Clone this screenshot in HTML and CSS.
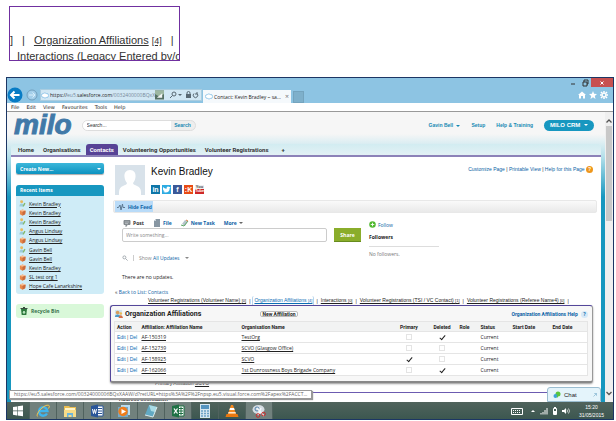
FILE: index.html
```html
<!DOCTYPE html>
<html lang="en">
<head>
<meta charset="utf-8">
<title>Contact: Kevin Bradley</title>
<link rel="stylesheet" href="styles.css">
</head>
<body>
<svg class="defs" width="0" height="0" aria-hidden="true">
  <symbol id="person" viewBox="0 0 8 8"><circle cx="3" cy="2" r="1.7" fill="#e9b95c"/><path d="M.5 7.5Q.5 4 3 4t2.5 3.500z" fill="#9dccdc"/><path d="M4 7l2-4 1.500 1-2 3.500z" fill="#83b86a"/></symbol>
  <symbol id="cube" viewBox="0 0 8 8"><path d="M1 2l3-1.500L7.500 2 7 6 4 7.700 1 6z" fill="#e8894a"/><path d="M1 2l3 1 3.500-1L4 .5z" fill="#f8c199"/><path d="M4 3v4.500L7 6l.5-4z" fill="#c96a3c"/></symbol>
  <symbol id="bubble" viewBox="0 0 10 8"><path d="M3 1.500Q5-.2 6.500 1.500 9.500 1 9.500 4T6.500 6.500Q5 8 3.500 6.500.5 6.500.5 4T3 1.500z" fill="#fff" stroke="#83bfe6"/></symbol>
</svg>

<aside class="callout">
  <p class="callout-row"><span>]</span><span>|</span><span><a href="#aff">Organization Affiliations</a> <a class="count" href="#aff">[4]</a></span><span>|</span></p>
  <p class="callout-next"><a href="#int">Interactions (Legacy Entered by/o</a></p>
</aside>

<main class="shot">
  <header class="chrome">
    <div class="win-controls">
      <button aria-label="Minimise"><svg viewBox="0 0 8 8"><path d="M2 5h4" stroke="#333"/></svg></button>
      <button aria-label="Restore"><svg viewBox="0 0 8 8"><path d="M2 3h4v4H2zM3 3V1h4v4H6" fill="none" stroke="#333"/></svg></button>
      <button class="close" aria-label="Close"><svg viewBox="0 0 8 8"><path d="M2.500 2.500l3 3m0-3l-3 3" stroke="#fff"/></svg></button>
    </div>
    <div class="address-row">
      <button class="back" aria-label="Back"><svg viewBox="0 0 16 16"><circle cx="8" cy="8" r="7.500" fill="#087cc5"/><path d="M12.500 8H4m3.500-3.500L4 8l3.500 3.500" fill="none" stroke="#fff" stroke-width="2"/></svg></button>
      <button class="forward" aria-label="Forward"><svg viewBox="0 0 12 12"><circle cx="6" cy="6" r="5" fill="#a4cfea" stroke="#729fbd"/><path d="M3 6h6M6.500 3.500L9 6 6.500 8.500" fill="none" stroke="#d9effb"/></svg></button>
      <div class="address">
        <svg class="ic"><use href="#bubble"/></svg>
        <span class="url">https://<i>eu5.</i>salesforce.com<i>/0032400000BQxX</i></span>
        <svg class="pic" viewBox="0 0 10 10"><path d="M0 0h10v10H0z" fill="#557064"/><path d="M0 0h10v4L5 7 0 4z" fill="#9db7a2"/><path d="M2 8l6-5v5z" fill="#f2f5f4"/></svg>
        <svg class="tools" viewBox="0 0 32 8"><g fill="none" stroke="#596872"><circle cx="6" cy="3" r="2"/><path d="M4.500 4.500L2 7M26 2.500a2.300 2.300 0 1 0 3 0M29 1v2h-2M19 3V2a1.500 1.500 0 0 1 3 0v1"/></g><path d="M10 3h4l-2 2zM18 3h5v4h-5z" fill="#596872"/></svg>
      </div>
      <div class="tab"><svg class="ic"><use href="#bubble"/></svg><span>Contact: Kevin Bradley ~ sa...</span><button aria-label="Close tab">×</button></div>
      <button class="new-tab" aria-label="New tab"></button>
      <svg class="fav" viewBox="0 0 30 8"><path d="M0 4l4-3.500L8 4H7v3.500H5V5H3v2.500H1V4zM15 0l1.100 2.700L19 3l-2.200 2 .7 3L15 6.300 12.500 8l.7-3L11 3l2.900-.3z" fill="#fff"/><path d="M26 0v8m-4-4h8m-7-3l6 6m0-6l-6 6" stroke="#fff" stroke-width="1.500"/><circle cx="26" cy="4" r="1.800" fill="#8dc4e3" stroke="#fff"/></svg>
    </div>
  </header>
  <nav class="menubar"><a href="#f">File</a><a href="#e">Edit</a><a href="#v">View</a><a href="#fa">Favourites</a><a href="#t">Tools</a><a href="#h">Help</a></nav>

  <div class="viewport">
    <div class="page">
      <header class="site-head">
        <span class="logo">milo</span>
        <form class="search"><input type="text" placeholder="Search..." aria-label="Search"><button type="button">Search</button></form>
        <nav class="user-nav"><a href="#g">Gavin Bell <b class="caret"></b></a><a href="#s">Setup</a><a href="#ht">Help &amp; Training</a><button class="app">MILO CRM <b class="caret"></b></button></nav>
      </header>
      <nav class="tabs"><a href="#home">Home</a><a href="#org">Organisations</a><a class="on" href="#con">Contacts</a><a href="#vo">Volunteering Opportunities</a><a href="#vr">Volunteer Registrations</a><a href="#add" aria-label="More tabs">+</a></nav>
      <div class="body">
        <aside class="side">
          <button class="create">Create New...<b class="caret"></b></button>
          <section class="recent">
            <h2>Recent Items</h2>
            <ul>
              <li><svg><use href="#person"/></svg><a href="#1">Kevin Bradley</a></li>
              <li><svg><use href="#cube"/></svg><a href="#2">Kevin Bradley</a></li>
              <li><svg><use href="#person"/></svg><a href="#3">Kevin Bradley</a></li>
              <li><svg><use href="#person"/></svg><a href="#4">Angus Lindsay</a></li>
              <li><svg><use href="#cube"/></svg><a href="#5">Angus Lindsay</a></li>
              <li><svg><use href="#person"/></svg><a href="#6">Gavin Bell</a></li>
              <li><svg><use href="#cube"/></svg><a href="#7">Gavin Bell</a></li>
              <li><svg><use href="#cube"/></svg><a href="#8">Kevin Bradley</a></li>
              <li><svg><use href="#cube"/></svg><a href="#9">SL test org 1</a></li>
              <li><svg><use href="#cube"/></svg><a href="#10">Hope Cafe Lanarkshire</a></li>
            </ul>
          </section>
          <a class="bin" href="#bin"><svg viewBox="0 0 8 8"><path d="M1 2h6L6.300 8H1.700z" fill="#2c7a3c"/><path d="M.5 1.500h7M3 .5h2" stroke="#3b4f40"/><path d="M3 6l1-2 1 2z" fill="none" stroke="#c8f0cc"/></svg>Recycle Bin</a>
        </aside>

        <section class="content">
          <div class="profile">
            <svg class="avatar" viewBox="0 0 30 30"><path d="M0 0h30v30H0z" fill="#d8e2ea"/><path d="M15 5c4 0 6 3 5.500 7-.3 3-1.500 5-2.500 6 0 3 8 2 8 9v3H4v-3c0-7 8-6 8-9-1-1-2.200-3-2.500-6C9 8 11 5 15 5z" fill="#fff"/></svg>
            <div>
              <h1>Kevin Bradley</h1>
              <div class="social"><a class="in" href="#li">in</a><a class="tw" href="#tw" aria-label="Twitter"><svg viewBox="0 0 9 9"><path d="M1 2q2 2 3.500 1.700Q4.500 1.500 6 1.500q1 0 1.300.6L8.500 2 7.700 3.200Q7.500 7.500 3.500 7.500 2 7.500.7 6.800 2 6.800 2.600 6.200 1 5.500 1 4.500z" fill="#fff"/></svg></a><a class="fb" href="#fb">f</a><a class="kl" href="#kl">:K</a><a class="yt" href="#yt"><span>You</span><span>Tube</span></a></div>
            </div>
            <p class="page-links"><a href="#c">Customize Page</a> | <a href="#p">Printable View</a> | <a href="#hp">Help for this Page</a> <span class="help">?</span></p>
          </div>
          <div class="feedbar"><button><svg viewBox="0 0 8 8"><path d="M0 4.500h1.500L3 2l1 5 1.500-6L6 4.500h2" fill="none" stroke="#5d7890"/></svg>Hide Feed</button></div>
          <div class="feed">
            <div class="publisher">
              <nav class="actions">
                <a class="post" href="#post"><svg viewBox="0 0 8 8"><path d="M1 1.500h6v4H4.500L3 7.500v-2H1z" fill="#858b90" stroke="#858b90"/><path d="M2 3h4M2 4.500h3" stroke="#cbd0d3" stroke-width=".6"/></svg>Post</a>
                <a href="#file"><svg viewBox="0 0 8 8"><path d="M3 0h4v8H1V2z" fill="#8796a2"/><path d="M1 2h2V0z" fill="#ccd5dc"/></svg>File</a>
                <a href="#task"><svg viewBox="0 0 8 8"><path d="M1 5l3-4 3 1-3 5z" fill="#b5c3ca"/><path d="M0 6l3 1 4-5" fill="none" stroke="#5da867"/><path d="M5 1l2 1" stroke="#df8046"/></svg>New Task</a>
                <a href="#more">More <b class="caret"></b></a>
              </nav>
              <div class="compose"><input type="text" placeholder="Write something..." aria-label="Write something"><button>Share</button></div>
              <p class="filter"><svg viewBox="0 0 8 8"><circle cx="3.200" cy="3.200" r="2" fill="none" stroke="#8d969c"/><path d="M5 5l2.500 2.500" stroke="#8d969c"/></svg><i></i><span>Show <a href="#all">All Updates</a></span><b class="caret"></b></p>
              <p class="empty">There are no updates.</p>
            </div>
            <div class="followers">
              <a href="#follow"><svg viewBox="0 0 8 8"><circle cx="4" cy="4" r="3.700" fill="#51b930"/><path d="M4 2v4M2 4h4" stroke="#fff"/></svg>Follow</a>
              <h2>Followers</h2>
              <p>No followers.</p>
            </div>
          </div>
          <p class="backlink">« <a href="#back">Back to List: Contacts</a></p>
          <nav class="related"><a href="#r1">Volunteer Registrations (Volunteer Name) <small>[0]</small></a><i>|</i><a class="on" href="#aff">Organization Affiliations <small>[4]</small></a><i>|</i><a href="#int">Interactions <small>[0]</small></a><i>|</i><a href="#r4">Volunteer Registrations (TSI / VC Contact) <small>[1]</small></a><i>|</i><a href="#r5">Volunteer Registrations (Referee Name4) <small>[0]</small></a><i>|</i></nav>
          <section class="panel" id="aff">
            <div class="panel-head">
              <svg viewBox="0 0 10 10"><path d="M1 1h8v7H1z" fill="#cfe3ee"/><circle cx="4" cy="4" r="2" fill="#d89b5a"/><path d="M1 9q0-3 3-3t3 3z" fill="#4f9bc7"/><circle cx="7.500" cy="5" r="1.500" fill="#edba55"/><path d="M5 10q.5-3 2.500-3T10 10z" fill="#d66e48"/></svg>
              <h2>Organization Affiliations</h2>
              <button>New Affiliation</button>
              <a href="#ah">Organization Affiliations Help <span>?</span></a>
            </div>
            <table>
              <colgroup><col class="c-action"><col class="c-name"><col class="c-org"><col class="c-flag"><col class="c-flag"><col class="c-role"><col class="c-status"><col class="c-start"><col></colgroup>
              <thead><tr><th>Action</th><th>Affiliation: Affiliation Name</th><th>Organisation Name</th><th class="mid">Primary</th><th class="mid">Deleted</th><th>Role</th><th>Status</th><th>Start Date</th><th>End Date</th></tr></thead>
              <tbody>
                <tr><td><a href="#e1">Edit</a> | <a href="#d1">Del</a></td><td><a href="#a1">AF-150319</a></td><td><a href="#o1">TestOrg</a></td><td class="mid"><input type="checkbox" aria-label="Primary"></td><td class="mid"><input type="checkbox" aria-label="Deleted" checked></td><td></td><td>Current</td><td></td><td></td></tr>
                <tr><td><a href="#e2">Edit</a> | <a href="#d2">Del</a></td><td><a href="#a2">AF-152739</a></td><td><a href="#o2">SCVO (Glasgow Office)</a></td><td class="mid"><input type="checkbox" aria-label="Primary"></td><td class="mid"><input type="checkbox" aria-label="Deleted"></td><td></td><td>Current</td><td></td><td></td></tr>
                <tr><td><a href="#e3">Edit</a> | <a href="#d3">Del</a></td><td><a href="#a3">AF-158925</a></td><td><a href="#o3">SCVO</a></td><td class="mid"><input type="checkbox" aria-label="Primary" checked></td><td class="mid"><input type="checkbox" aria-label="Deleted"></td><td></td><td>Current</td><td></td><td></td></tr>
                <tr><td><a href="#e4">Edit</a> | <a href="#d4">Del</a></td><td><a href="#a4">AF-162066</a></td><td><a href="#o4">1st Dunrossness Boys Brigade Company</a></td><td class="mid"><input type="checkbox" aria-label="Primary"></td><td class="mid"><input type="checkbox" aria-label="Deleted" checked></td><td></td><td>Current</td><td></td><td></td></tr>
              </tbody>
            </table>
          </section>
          <p class="under">Primary Affiliation <a href="#scvo">SCVO</a></p>
          <div class="rule"></div>
          <h3 class="addr">Address Information</h3>
        </section>
      </div>
      <p class="status">https://eu5.salesforce.com/00324000006BQxXAAW/d?retURL=https%3A%2F%2Fnpsp.eu5.visual.force.com%2Fapex%2FACCT...</p>
      <button class="chat"><svg viewBox="0 0 8 8"><circle cx="5" cy="3" r="2.500" fill="#5ac63d"/><circle cx="2.500" cy="5" r="2" fill="#3da2d6"/><path d="M5 4v3L3.500 5z" fill="#5ac63d"/></svg><span>Chat</span><svg viewBox="0 0 8 8"><path d="M2 6l4-4M3 2h3v3" fill="none" stroke="#86b7d2"/></svg></button>
    </div>
    <div class="scrollbar"><svg viewBox="0 0 8 8"><path d="M1.500 5.500L4 3l2.500 2.500" fill="none" stroke="#555" stroke-width="1.300"/></svg><i></i><svg viewBox="0 0 8 8"><path d="M1.500 3L4 5.500 6.500 3" fill="none" stroke="#555" stroke-width="1.300"/></svg></div>
  </div>

  <footer class="taskbar">
    <button class="start" aria-label="Start"><svg viewBox="0 0 14 14"><path d="M2 3l4-.6v4.200H2zM6.600 2.300L12 1.500v5.100H6.600zM2 7.200h4v4.200l-4-.6zM6.600 7.200H12v5.100l-5.400-.8z" fill="#fff"/></svg></button>
    <button class="lit" aria-label="Internet Explorer"><svg viewBox="0 0 14 14"><path d="M11 9.500A4.300 4.300 0 1 1 11.500 7H4" fill="none" stroke="#3fb5ef" stroke-width="2.300"/><path d="M1.500 12.500C-1 10 9-1 13 1.500q1 1-.5 3" fill="none" stroke="#f3c64b"/></svg></button>
    <button class="lit" aria-label="File Explorer"><svg viewBox="0 0 14 14"><path d="M1 2h5l1 1h6v10H1z" fill="#e9bd50"/><path d="M2 4h10v3H2z" fill="#fff4c8"/><path d="M1 6h12v7H1z" fill="#f8dc88"/><path d="M4 13V9h6v4H8.500v-2h-3v2z" fill="#6eb6dc"/></svg></button>
    <button class="lit" aria-label="Word"><svg viewBox="0 0 14 14"><path d="M7 2h6v10H7z" fill="#fff" stroke="#2a5699"/><path d="M8 4.500h4M8 7h4M8 9.500h4" stroke="#2a5699"/><path d="M1 2l7-1.500v13L1 12z" fill="#2a5699"/><path d="M2.500 5l1 4.500 1-4 1 4 1-4.500" fill="none" stroke="#fff"/></svg></button>
    <button class="lit" aria-label="Media player"><svg viewBox="0 0 14 14"><path d="M4 1h9v10H4z" fill="#b6dcf1"/><path d="M1 3h10v10H1z" fill="#74a9c9"/><circle cx="6" cy="7.500" r="4.700" fill="#ef7d1c"/><path d="M4.500 5l4.500 2.500-4.500 2.500z" fill="#fff"/></svg></button>
    <button class="lit" aria-label="Notes"><svg viewBox="0 0 14 14"><path d="M5 1l8 2-4 10-8-2z" fill="#62a9c3"/><path d="M5 1l8 2-2 5-4-1z" fill="#a9dbe6"/><path d="M1 11l8 2 4-10" fill="none" stroke="#dcebed"/></svg></button>
    <button class="lit" aria-label="Excel"><svg viewBox="0 0 14 14"><path d="M7 2h6v10H7z" fill="#fff" stroke="#1e7145"/><path d="M8 4.500h4M8 7h4M8 9.500h4M10 3v8" stroke="#1e7145"/><path d="M1 2l7-1.500v13L1 12z" fill="#1e7145"/><path d="M3 4.500l3.500 5m0-5l-3.500 5" stroke="#fff" stroke-width="1.300"/></svg></button>
    <button aria-label="Calculator"><svg viewBox="0 0 14 14"><path d="M2 0h10v14H2z" fill="#d5e6ef"/><path d="M3 1h8v4H3z" fill="#5594bf"/><path d="M3 7h2m1 0h2m1 0h2M3 9.500h2m1 0h2m1 0h2M3 12h2m1 0h2m1 0h2" stroke="#6aa1c6" stroke-width="1.500"/></svg></button>
    <button aria-label="VLC"><svg viewBox="0 0 14 14"><path d="M6 1h2l3 9H3z" fill="#f58a1f"/><path d="M5 4h4l.7 2H4.300z" fill="#fff"/><path d="M1.500 10h11l1 3H.5z" fill="#e9780f"/><path d="M3.500 8h7l.5 1.500H3z" fill="#ffe5ca"/></svg></button>
    <button class="lit" aria-label="Snipping tool"><svg viewBox="0 0 14 14"><ellipse cx="6.500" cy="5.500" rx="6" ry="4.500" fill="#d6dde3"/><circle cx="5" cy="5" r="2" fill="none" stroke="#5081ab"/><path d="M5 4l7 8M9 4l-3 7" stroke="#f3f7fa" stroke-width="1.500"/><circle cx="11.500" cy="10" r="1.800" fill="none" stroke="#cf2929"/><circle cx="6" cy="11.500" r="1.800" fill="none" stroke="#cf2929"/></svg></button>
    <div class="tray">
      <svg class="kb" viewBox="0 0 12 8"><path d="M.5 1.500h11v6H.5z" fill="none" stroke="#fff"/><path d="M2 3.500h8M2 5.500h8" stroke="#fff" stroke-dasharray="1 1"/></svg>
      <svg viewBox="0 0 8 8"><path d="M2 5l2-2 2 2z" fill="#fff"/></svg>
      <svg viewBox="0 0 8 8"><path d="M1 7.500V6M3 7.500V5M5 7.500V3M7 7.500V1" stroke="#fff"/></svg>
      <svg viewBox="0 0 8 8"><path d="M2.500 1.500h3v6h-3z" fill="none" stroke="#fff"/><path d="M3 4h2v3H3zM3 0h2v1H3z" fill="#fff"/></svg>
      <svg viewBox="0 0 8 8"><path d="M0 3h2l2-2v6L2 5H0z" fill="#fff"/><path d="M5 2.500q1 1.500 0 3M6.500 1.500q2 2.500 0 5" fill="none" stroke="#fff" stroke-width=".7"/></svg>
      <p class="clock"><time>15:20</time><time>31/05/2015</time></p>
    </div>
  </footer>
</main>
</body>
</html>
```

FILE: styles.css
```css
* { box-sizing: border-box; }
body { margin: 0; padding: 6px 2px 2px 6px; min-height: 100vh; background: #fff; color: #222; font: 5px/8px "Liberation Sans", sans-serif; display: flex; flex-direction: column; }
p, h1, h2, h3, ul { margin: 0; padding: 0; font-size: inherit; list-style: none; }
button, input { font: inherit; color: inherit; margin: 0; padding: 0; border: 0; background: none; border-radius: 0; }
input { min-width: 0; }
svg { display: block; flex: none; width: 8px; height: 8px; }
a { color: inherit; text-decoration: none; white-space: nowrap; }
.defs { position: absolute; width: 0; height: 0; }
.caret { display: inline-block; border: 2px solid transparent; border-top-color: currentColor; border-bottom: 0; vertical-align: middle; }

.callout { width: 171px; height: 55px; margin-left: 3px; border: 1px solid #7030a0; overflow: hidden; font-size: 11px; line-height: 15px; color: #333; padding-top: 26px; }
.callout a { text-decoration: underline; }
.callout-row { display: flex; gap: 9px; white-space: nowrap; }
.callout .count { font-size: 9px; }
.callout-next { padding-left: 7px; white-space: nowrap; }

.shot { margin-top: 16px; border: 1px solid #1c3664; flex: 1; display: flex; flex-direction: column; }
.chrome { background: #8dc4e3; }
.win-controls { display: flex; justify-content: flex-end; height: 9px; }
.win-controls button { width: 12px; padding-left: 2px; }
.win-controls .close { width: 22px; background: #c75050; padding-left: 7px; }
.address-row { display: flex; align-items: center; height: 16px; padding-right: 5px; }
.back svg { width: 16px; height: 16px; }
.forward { margin: 0 2px 0 3px; }
.forward svg { width: 12px; height: 12px; }
.address { display: flex; align-items: center; width: 162px; height: 12px; background: #d1e7f4; border: 1px solid #aacde0; font: 5px/10px "Open Sans", sans-serif; }
.ic { width: 8px; height: 7px; margin-right: 1px; }
.url { flex: 1; overflow: hidden; white-space: nowrap; }
.url i { font-style: normal; color: #789; }
.pic { width: 9px; height: 10px; }
.tools { width: 32px; margin: 0 1px 0 4px; }
.tab { display: flex; align-items: center; align-self: flex-end; width: 88px; height: 13px; margin-left: 1px; background: #f5f9fc; padding: 0 2px; font: 5px/12px "Open Sans", sans-serif; }
.tab span { flex: 1; white-space: nowrap; }
.tab button { color: #777; font-size: 7px; }
.new-tab { align-self: flex-end; width: 11px; height: 12px; margin-left: 2px; background: #7eb0cb; border: 1px solid #74a4be; }
.fav { width: 30px; margin-left: auto; }
.menubar { display: flex; gap: 7px; height: 9px; padding: 0 4px; background: #fff; border-bottom: 1px solid #999; font: 5px/8px "DejaVu Sans", sans-serif; }

.viewport { flex: 1; display: flex; }
.page { flex: 1; min-width: 0; position: relative; padding: 0 4px; background: linear-gradient(#f6f6f6 22px, #d3ebf1 34px, #b7e1eb 44px, #1797bf 85px); }
.scrollbar { width: 8px; display: flex; flex-direction: column; background: #efefef; padding: 5px 0; }
.scrollbar i { height: 95px; margin: 1px 1px auto; background: #c8c8c8; }

.site-head { display: flex; align-items: center; height: 32px; padding: 0 7px 6px 3px; }
.logo { font: italic 700 28px/24px "Liberation Sans", sans-serif; color: #4179a8; -webkit-text-stroke: 1px #4179a8; }
.search { display: flex; width: 114px; height: 11px; margin-left: 10px; border: 1px solid #ddd; border-radius: 6px; background: #eee; overflow: hidden; }
.search input { flex: 1; padding-left: 4px; background: #fff; }
.search input::placeholder, .search input { color: #333; }
.search button { width: 24px; color: #1689b3; font-weight: 700; }
.user-nav { margin-left: auto; display: flex; align-items: center; gap: 11px; font-weight: 700; color: #1689b3; }
.user-nav .caret { margin-left: 2px; }
.app { width: 50px; height: 11px; border-radius: 6px; background: #1797c0; color: #fff; font-size: 6px; }
.tabs { display: flex; gap: 1px; height: 13px; background: linear-gradient(#d2ecf1, #e2f1f5); border-bottom: 2px solid #8c82b8; border-radius: 4px 4px 0 0; padding-left: 3px; color: #333; font: 700 6px/11px Roboto, sans-serif; }
.tabs a { padding: 0 4px; }
.tabs a:last-child { padding-left: 8px; }
.tabs .on { background: #574396; color: #fff; border-radius: 3px 3px 0 0; }

.body { display: flex; background: #fff; height: 245px; overflow: hidden; }
.side { width: 88px; margin: 6px 0 0 5px; flex: none; font-family: "Open Sans", sans-serif; }
.create { display: flex; align-items: center; justify-content: space-between; width: 100%; height: 11px; padding: 0 3px 0 4px; border-radius: 2px; background: linear-gradient(#3cb7da, #0c92c0); color: #fff; font-weight: 700; box-shadow: 0 1px 1px #aaa; }
.recent { margin-top: 11px; border-radius: 3px; background: #cfecf7; overflow: hidden; }
.recent h2 { height: 11px; padding-left: 4px; line-height: 11px; background: #1797c0; color: #fff; }
.recent ul { height: 98px; padding: 3px 0 3px 3px; display: grid; grid-auto-rows: 1fr; }
.recent li { display: flex; align-items: center; }
.recent svg { width: 7px; height: 7px; margin-right: 3px; }
.recent a { text-decoration: underline; }
.bin { display: flex; align-items: center; gap: 3px; height: 14px; margin-top: 10px; padding-left: 4px; border-radius: 3px; background: #d9f8d9; color: #36704a; font-weight: 700; }

.content { flex: 1; min-width: 0; padding: 8px 4px 0 9px; display: flex; flex-direction: column; }
.profile { display: flex; padding-left: 2px; }
.avatar { width: 30px; height: 30px; margin-right: 6px; }
h1 { font: 10px/13px "Liberation Sans", sans-serif; color: #111; }
.social { display: flex; gap: 2px; margin-top: 7px; }
.social a { width: 9px; height: 9px; color: #fff; text-align: center; font: 700 7px/9px "Liberation Sans", sans-serif; }
.social svg { width: 9px; height: 9px; }
.in { background: #0e76a8; } .tw { background: #2dabe2; } .fb { background: #3b5998; } .kl { background: #e84b14; }
.social .yt { color: #444; font-size: 4px; line-height: 4px; background: #eee; }
.yt span { display: block; }
.yt span + span { background: #ce2727; color: #fff; height: 5px; }
.page-links { margin-left: auto; padding-right: 4px; color: #333; }
.page-links a, .actions, .filter a, .followers a, .backlink a { color: #0b5fa5; }
.help { display: inline-block; width: 7px; height: 7px; line-height: 7px; border-radius: 4px; background: #ee961b; color: #fff; text-align: center; font-weight: 700; }
.feedbar { height: 13px; margin-top: 5px; border: 1px solid #e8e8e8; border-radius: 2px; background: linear-gradient(#fafafa, #e9e9e9); }
.feedbar button { display: flex; align-items: center; gap: 3px; width: 38px; height: 11px; margin-left: 1px; padding-left: 2px; background: #b9dbf8; color: #0b5fa5; font-weight: 700; white-space: nowrap; }
.feed { display: flex; font-family: "Open Sans", sans-serif; }
.publisher { width: 239px; margin: 4px 8px 0 9px; }
.actions { display: flex; gap: 9px; height: 11px; padding-left: 1px; font-weight: 700; }
.actions a { display: flex; align-items: center; gap: 2px; }
.actions .post { color: #333; }
.actions .caret { color: #666; }
.compose { display: flex; gap: 7px; height: 14px; }
.compose input { flex: 1; border: 1px solid #ccc; border-radius: 2px; padding-left: 3px; }
.compose input::placeholder { color: #888; opacity: 1; }
.compose button { width: 27px; background: #8aad2b; color: #fff; font-weight: 700; border-bottom: 1px solid #678c1e; }
.filter { display: flex; align-items: center; gap: 5px; margin-top: 12px; color: #888; }
.filter svg { width: 6px; height: 6px; }
.filter i { width: 1px; height: 6px; background: #ccc; }
.empty { margin-top: 11px; }
.followers { width: 70px; margin-top: 8px; }
.followers a { display: flex; gap: 2px; }
.followers svg { width: 7px; height: 7px; }
.followers h2 { margin-top: 4px; padding-bottom: 5px; border-bottom: 1px solid #ddd; }
.followers p { color: #777; margin-top: 3px; }
.backlink { margin: 7px 0 0 2px; font-family: "Open Sans", sans-serif; }
.related { display: flex; align-items: center; height: 9px; padding-left: 35px; gap: 3px; }
.related a { text-decoration: underline; }
.related i { font-style: normal; }
.related small { font-size: 4px; }
.related .on { color: #0b6eb5; padding: 0 1px; margin: 0 -1px; border: 1px solid #b7d4ec; border-width: 0 1px; border-radius: 2px 2px 0 0; }
.panel { margin: 0 4px 0 -3px; padding: 0 4px 5px 3px; border: 1px solid #54479a; border-right-color: #999; border-bottom: 2px solid #888; border-radius: 3px; background: #f7f7f7; box-shadow: 0 1px 2px #999; }
.panel-head { display: flex; align-items: center; height: 15px; font-family: Roboto, sans-serif; }
.panel-head svg { width: 9px; height: 9px; margin-right: 2px; }
.panel-head h2 { width: 135px; font-size: 7px; white-space: nowrap; }
.panel-head button { width: 38px; height: 6px; line-height: 4px; border: 1px solid #bbb; border-radius: 2px; background: #fff; font-weight: 700; white-space: nowrap; }
.panel-head a { margin-left: auto; color: #0b5fa5; font-weight: 700; }
.panel-head a span { display: inline-block; width: 7px; height: 7px; line-height: 7px; margin-left: 2px; border-radius: 4px; background: #d6e9f7; text-align: center; }
table { width: 100%; border-collapse: collapse; table-layout: fixed; background: #fff; border: 1px solid #e5e5e5; }
.c-action { width: 25px; } .c-name { width: 100px; } .c-org { width: 152px; } .c-flag { width: 33px; } .c-role { width: 21px; } .c-status { width: 32px; } .c-start { width: 40px; }
th, td { height: 11px; padding: 0 0 0 2px; text-align: left; white-space: nowrap; border-bottom: 1px solid #e5e5e5; line-height: 8px; }
th { height: 10px; background: #f2f3f3; font-family: Roboto, sans-serif; }
td { font-family: "Open Sans", sans-serif; }
td:first-child { color: #555; font-family: "Liberation Sans", sans-serif; }
td:first-child a { color: #0b6eb5; }
td:nth-child(2) a, td:nth-child(3) a { text-decoration: underline; }
.mid { text-align: center; }
td input { appearance: none; display: block; width: 6px; height: 6px; margin: 0 auto; border: 1px solid #e4e4e4; }
td input:checked { width: 3px; height: 6px; border: solid #222; border-width: 0 1px 1px 0; transform: rotate(40deg); }
.under { height: 7px; margin: -3px 0 0 42px; line-height: 7px; }
.under a { text-decoration: underline; }
.panel { position: relative; z-index: 1; }
.rule { margin-top: 5px; border-top: 1px solid #6c5bb1; }
.addr { margin: 2px 0 0 6px; }
.status { position: absolute; z-index: 2; left: 2px; bottom: 3px; height: 9px; padding: 0 4px; border: 1px solid #999; background: #fff; color: #666; font: 5px/7px "Open Sans", sans-serif; white-space: nowrap; box-shadow: 1px 1px 1px #999; }
.chat { position: absolute; right: 4px; bottom: 0; width: 54px; height: 15px; display: flex; align-items: center; gap: 3px; padding: 0 2px 0 5px; border: 1px solid #9bbdd0; border-radius: 3px 3px 0 0; background: #e4f4fb; font-size: 6px; }
.chat svg:last-child { margin-left: auto; width: 6px; height: 6px; }

.taskbar { display: flex; height: 17px; background: linear-gradient(#50635c, #3c5750); color: #fff; }
.taskbar > button { width: 27px; display: grid; place-items: center; border-right: 1px solid #50625e; }
.taskbar .start { width: 23px; }
.taskbar > button svg { width: 14px; height: 14px; }
.taskbar .lit { background: #71817d; }
.tray { margin-left: auto; display: flex; align-items: center; gap: 3px; padding-right: 9px; }
.tray .kb { width: 12px; margin-right: 3px; }
.clock { margin-left: 6px; text-align: center; font-size: 5px; line-height: 8px; }
.clock time { display: block; }
```
